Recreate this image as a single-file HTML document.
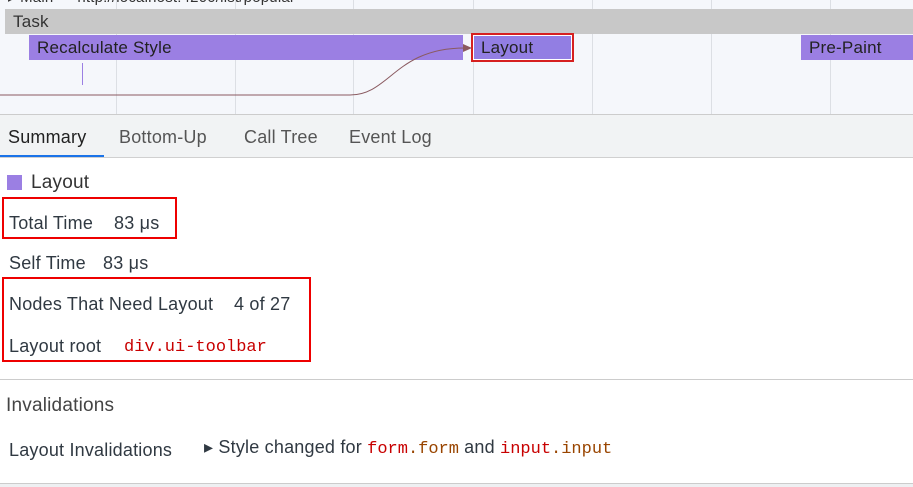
<!DOCTYPE html>
<html><head><style>
*{margin:0;padding:0;box-sizing:border-box}
body{width:913px;height:487px;overflow:hidden;background:#fff;font-family:"Liberation Sans",sans-serif;color:#303942;position:relative;font-size:18px;letter-spacing:0.2px}
.a{position:absolute;white-space:nowrap}
.g{position:absolute;top:0;height:114px;width:1px;background:#dcdfe4}
.mono{font-family:"Liberation Mono",monospace;font-size:17px;letter-spacing:0}
.r{color:#c80000}.b{color:#994500}
.f16{font-size:17px}
</style></head><body>
<div class="a" style="left:0;top:0;width:913px;height:114px;background:#f5f7fb"></div>
<div class="g" style="left:116px"></div><div class="g" style="left:235px"></div><div class="g" style="left:353px"></div><div class="g" style="left:473px"></div><div class="g" style="left:592px"></div><div class="g" style="left:711px"></div><div class="g" style="left:830px"></div>
<div class="a" style="left:8px;top:-12px;font-size:15px;color:#333">▸ Main — http://localhost:4200/list/popular</div>
<div class="a" style="left:5px;top:9px;width:908px;height:25px;background:#c8c8c8"></div>
<div class="a f16" style="left:13px;top:12px;color:#333">Task</div>
<div class="a" style="left:29px;top:35px;width:434px;height:25px;background:#9b7fe3"></div>
<div class="a f16" style="left:37px;top:38px;color:#222">Recalculate Style</div>
<div class="a" style="left:801px;top:35px;width:112px;height:25px;background:#9b7fe3"></div>
<div class="a f16" style="left:809px;top:38px;color:#222">Pre-Paint</div>
<div class="a" style="left:471px;top:33px;width:103px;height:29px;border:2px solid #d62020;background:#927ee3;box-shadow:inset 0 0 0 1px #fff"></div>
<div class="a f16" style="left:481px;top:38px;color:#222">Layout</div>
<div class="a" style="left:82px;top:63px;width:1px;height:22px;background:#9b7fe3"></div>
<svg class="a" style="left:0;top:40px" width="480" height="60"><path d="M0 55 H350 C390 55 395 8 465 8" fill="none" stroke="#8a5a60" stroke-width="1"/><path d="M463 4 L472 8 L463 12Z" fill="#8a5a60"/></svg>
<div class="a" style="left:0;top:114px;width:913px;height:44px;background:#f1f3f4;border-top:1px solid #ccc;border-bottom:1px solid #d0d0d0"></div>
<div class="a" style="left:8px;top:127px;color:#222">Summary</div>
<div class="a" style="left:119px;top:127px;color:#555">Bottom-Up</div>
<div class="a" style="left:244px;top:127px;color:#555">Call Tree</div>
<div class="a" style="left:349px;top:127px;color:#555">Event Log</div>
<div class="a" style="left:0;top:155px;width:104px;height:2px;background:#1a73e8"></div>
<div class="a" style="left:7px;top:175px;width:15px;height:15px;background:#9b7fe3"></div>
<div class="a" style="left:31px;top:172px;font-size:19px;color:#333">Layout</div>
<div class="a" style="left:9px;top:213px">Total Time</div><div class="a" style="left:114px;top:213px">83 μs</div>
<div class="a" style="left:2px;top:197px;width:175px;height:42px;border:2px solid #e00"></div>
<div class="a" style="left:9px;top:253px">Self Time</div><div class="a" style="left:103px;top:253px">83 μs</div>
<div class="a" style="left:9px;top:294px">Nodes That Need Layout</div><div class="a" style="left:234px;top:294px">4 of 27</div>
<div class="a" style="left:9px;top:336px">Layout root</div><div class="a mono r" style="left:124px;top:338px">div.ui-toolbar</div>
<div class="a" style="left:2px;top:277px;width:309px;height:85px;border:2px solid #e00"></div>
<div class="a" style="left:0;top:379px;width:913px;height:1px;background:#ccc"></div>
<div class="a" style="left:6px;top:395px;font-size:19px;color:#444">Invalidations</div>
<div class="a" style="left:9px;top:440px">Layout Invalidations</div>
<div class="a" style="left:204px;top:437px">▸ Style changed for <span class="mono r">form</span><span class="mono b">.form</span> and <span class="mono r">input</span><span class="mono b">.input</span></div>
<div class="a" style="left:0;top:483px;width:913px;height:4px;background:#eef0f2;border-top:1px solid #ccc"></div>
</body></html>
